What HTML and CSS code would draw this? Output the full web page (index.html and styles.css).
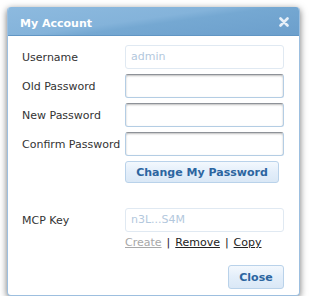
FILE: index.html
```html
<!DOCTYPE html>
<html>
<head>
<meta charset="utf-8">
<link rel="stylesheet" href="styles.css">
</head>
<body>
<div class="dialog">
  <div class="titlebar">
    <span class="title">My Account</span>
    <svg class="close-x" width="10" height="10" viewBox="0 0 10 10"><path d="M1.5 1.5 L8.5 8.5 M8.5 1.5 L1.5 8.5" stroke="#e6eff8" stroke-width="2.6" stroke-linecap="round"/></svg>
  </div>
  <div class="content">
    <div class="form">
      <label class="lbl">Username</label>
      <div class="field disabled">admin</div>
      <label class="lbl">Old Password</label>
      <div class="field"></div>
      <label class="lbl">New Password</label>
      <div class="field"></div>
      <label class="lbl">Confirm Password</label>
      <div class="field"></div>
      <span></span>
      <button class="btn wide">Change My Password</button>
    </div>
    <div class="form mcp">
      <label class="lbl">MCP Key</label>
      <div class="field disabled">n3L...S4M</div>
      <span></span>
      <div class="links"><a class="dim">Create</a> | <a>Remove</a> | <a>Copy</a></div>
    </div>
    <div class="footer">
      <button class="btn close">Close</button>
    </div>
  </div>
</div>
</body>
</html>
```
FILE: styles.css
```css
html, body { margin: 0; padding: 0; background: #fff; }
body { font-family: "DejaVu Sans", Verdana, sans-serif; font-size: 11px; color: #333; }
.dialog {
  margin: 7px 0 0 7px;
  width: 291px;
  border: 1px solid #9dbfdf;
  border-top: none;
  border-radius: 4px;
  background: #fff;
  box-shadow: 0 2px 7px rgba(0,0,0,0.55);
  overflow: hidden;
}
.titlebar {
  height: 29px;
  display: flex;
  align-items: center;
  justify-content: space-between;
  padding: 4px 10px 0 12px;
  background: linear-gradient(172deg, #8dbadf 0%, #84b3da 45%, #75a8d2 55%, #6c9fcc 100%);
  border-bottom: 1px solid #6196c4;
  box-sizing: border-box;
}
.title { color: #fff; font-weight: bold; font-size: 11px; }
.close-x { display: block; margin-top: -3px; }
.content { padding: 9px 15px 6px 14px; }
.form {
  display: grid;
  grid-template-columns: 103px 159px;
  row-gap: 5px;
  align-items: center;
}
.lbl { color: #333; }
.field {
  height: 24px;
  box-sizing: border-box;
  border: 1px solid #b4cde4;
  border-top-color: #8e9298;
  border-radius: 3px;
  box-shadow: inset 0 1px 2px rgba(0,0,0,0.25);
  padding: 0 5px;
  line-height: 22px;
  color: #b3c8dd;
  background: #fff;
}
.field.disabled { border-color: #e0e9f2; box-shadow: none; }
.btn {
  font-family: "DejaVu Sans", Verdana, sans-serif;
  font-size: 11px;
  font-weight: bold;
  color: #2c65a0;
  border: 1px solid #b9d2ea;
  border-radius: 3px;
  background: linear-gradient(#f3f8fd, #e3eefa 50%, #dae8f6);
  padding: 0;
  height: 22px;
  box-sizing: border-box;
}
.btn.wide { width: 154px; }
.mcp { margin-top: 25px; }
.links { color: #222; line-height: 14px; margin-top: -1px; word-spacing: 1.5px; }
.links a { color: #222; text-decoration: underline; }
.links a.dim { color: #a8a8a8; }
.footer { display: flex; justify-content: flex-end; margin-top: 15px; }
.btn.close { width: 56px; height: 24px; }
```
